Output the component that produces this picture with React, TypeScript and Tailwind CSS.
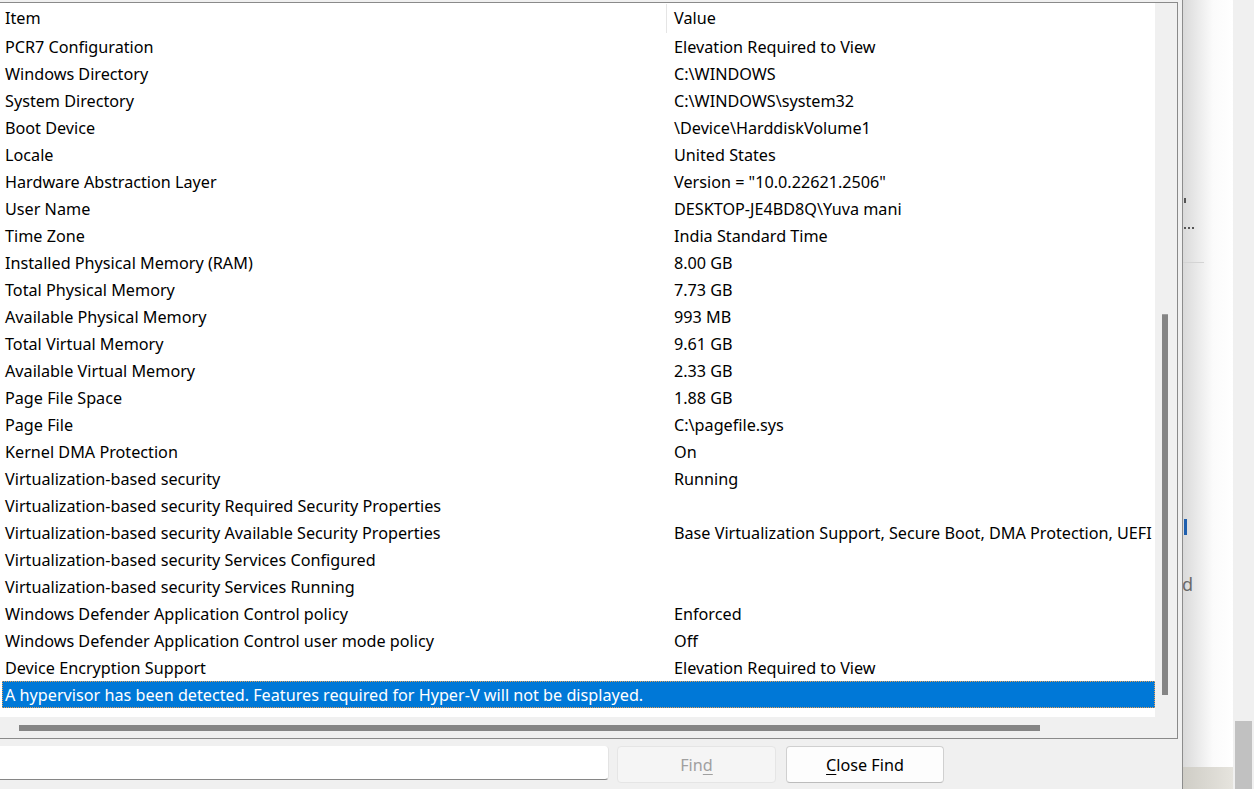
import React from "react";

const rows: [string, string][] = [
  ["PCR7 Configuration", "Elevation Required to View"],
  ["Windows Directory", "C:\\WINDOWS"],
  ["System Directory", "C:\\WINDOWS\\system32"],
  ["Boot Device", "\\Device\\HarddiskVolume1"],
  ["Locale", "United States"],
  ["Hardware Abstraction Layer", 'Version = "10.0.22621.2506"'],
  ["User Name", "DESKTOP-JE4BD8Q\\Yuva mani"],
  ["Time Zone", "India Standard Time"],
  ["Installed Physical Memory (RAM)", "8.00 GB"],
  ["Total Physical Memory", "7.73 GB"],
  ["Available Physical Memory", "993 MB"],
  ["Total Virtual Memory", "9.61 GB"],
  ["Available Virtual Memory", "2.33 GB"],
  ["Page File Space", "1.88 GB"],
  ["Page File", "C:\\pagefile.sys"],
  ["Kernel DMA Protection", "On"],
  ["Virtualization-based security", "Running"],
  ["Virtualization-based security Required Security Properties", ""],
  [
    "Virtualization-based security Available Security Properties",
    "Base Virtualization Support, Secure Boot, DMA Protection, UEFI",
  ],
  ["Virtualization-based security Services Configured", ""],
  ["Virtualization-based security Services Running", ""],
  ["Windows Defender Application Control policy", "Enforced"],
  ["Windows Defender Application Control user mode policy", "Off"],
  ["Device Encryption Support", "Elevation Required to View"],
];

const font = { fontFamily: '"Noto Sans", "Segoe UI", Arial, sans-serif' };

export default function App() {
  return (
    <div
      className="flex h-[789px] w-[1254px] overflow-hidden bg-[#f0f0f0] text-[16.2px] leading-none text-black"
      style={font}
    >
      {/* system information dialog */}
      <div className="flex w-[1182px] shrink-0 flex-col pt-[2px]">
        <div className="flex h-[737px] w-[1178px] flex-col border-y border-r border-[#8a8a8a]">
          <div className="flex min-h-0 flex-1">
            <div className="flex w-[1155px] shrink-0 flex-col overflow-hidden bg-white">
              {/* header */}
              <div className="flex h-[30px] shrink-0 pl-[5px]">
                <div className="flex w-[661px] shrink-0 items-center pt-[1px]">Item</div>
                <div className="mt-[1px] h-[29px] w-px bg-[#e5e5e5]" />
                <div className="flex items-center pl-[7px] pt-[1px]">Value</div>
              </div>
              {rows.map(([item, value]) => (
                <div key={item} className="ml-[2px] flex h-[27px] shrink-0 items-center pl-[3px] pt-[2px]">
                  <div className="w-[669px] shrink-0 whitespace-nowrap">{item}</div>
                  <div className="whitespace-nowrap">{value}</div>
                </div>
              ))}
              <div className="ml-[2px] flex h-[27px] w-[1153px] shrink-0 items-center border border-dotted border-[#e8a055] bg-[#0078d7] pl-[2px] pt-[1px] text-white">
                A hypervisor has been detected. Features required for Hyper-V will not be displayed.
              </div>
              <div className="flex-1" />
            </div>
            {/* vertical scrollbar */}
            <div className="flex w-[22px] flex-col bg-[#f0f0f0] pl-[7px] pt-[311px]">
              <div className="h-[381px] w-[6px] border-t border-[#a0a0a0] bg-[#858585]" />
            </div>
          </div>
          {/* horizontal scrollbar */}
          <div className="flex h-[21px] shrink-0 items-center bg-[#f0f0f0] pl-[19px]">
            <div className="h-[6px] w-[1021px] bg-[#858585]" />
          </div>
        </div>

        {/* find bar */}
        <div className="mt-[7px] flex items-start">
          <div className="h-[34px] w-[609px] rounded-r-[4px] border-b border-r border-b-[#868686] border-r-[#e3e3e3] bg-white" />
          <div className="ml-[8px] flex h-[37px] w-[159px] items-center justify-center rounded-[4px] border border-[#e5e5e5] bg-[#f5f5f5] pt-[1px] text-[#a0a0a0]">
            Fin<span className="underline underline-offset-[3px]">d</span>
          </div>
          <div className="ml-[10px] flex h-[37px] w-[158px] items-center justify-center rounded-[4px] border border-[#d0d0d0] border-b-[#bcbcbc] bg-[#fdfdfd] pt-[1px]">
            <span className="underline underline-offset-[3px]">C</span>lose Find
          </div>
        </div>
      </div>

      {/* window behind */}
      <div className="w-px shrink-0 bg-[#8c8c8c]" />
      <div className="flex w-[50px] shrink-0 flex-col overflow-hidden bg-gradient-to-r from-[#dadada] via-[#fbfbfb] via-60% to-white">
        <div className="ml-[1px] mt-[198px] h-[5px] w-[2px] bg-[#555]" />
        <div className="mt-[24px] flex gap-[2px] pl-[1px]">
          <div className="h-[2px] w-[2px] bg-[#555]" />
          <div className="h-[2px] w-[2px] bg-[#555]" />
          <div className="h-[2px] w-[2px] bg-[#555]" />
        </div>
        <div className="mt-[33px] h-px w-[21px] bg-[#d4d4d4]" />
        <div className="ml-[1px] mt-[256px] h-[16px] w-[3px] bg-[#1f5fae]" />
        <div className="-ml-[1px] mt-[40px] text-[18px] leading-none text-[#6a6a6a]">d</div>
        <div className="flex-1" />
        <div className="h-[22px] bg-gradient-to-r from-[#cfcdc6] to-[#e6e4de]" />
      </div>
      <div className="flex w-[21px] shrink-0 flex-col bg-[#f0f0f0] pl-[2px]">
        <div className="flex-1" />
        <div className="h-[68px] w-[17px] bg-[#c1c1c1]" />
      </div>
    </div>
  );
}
